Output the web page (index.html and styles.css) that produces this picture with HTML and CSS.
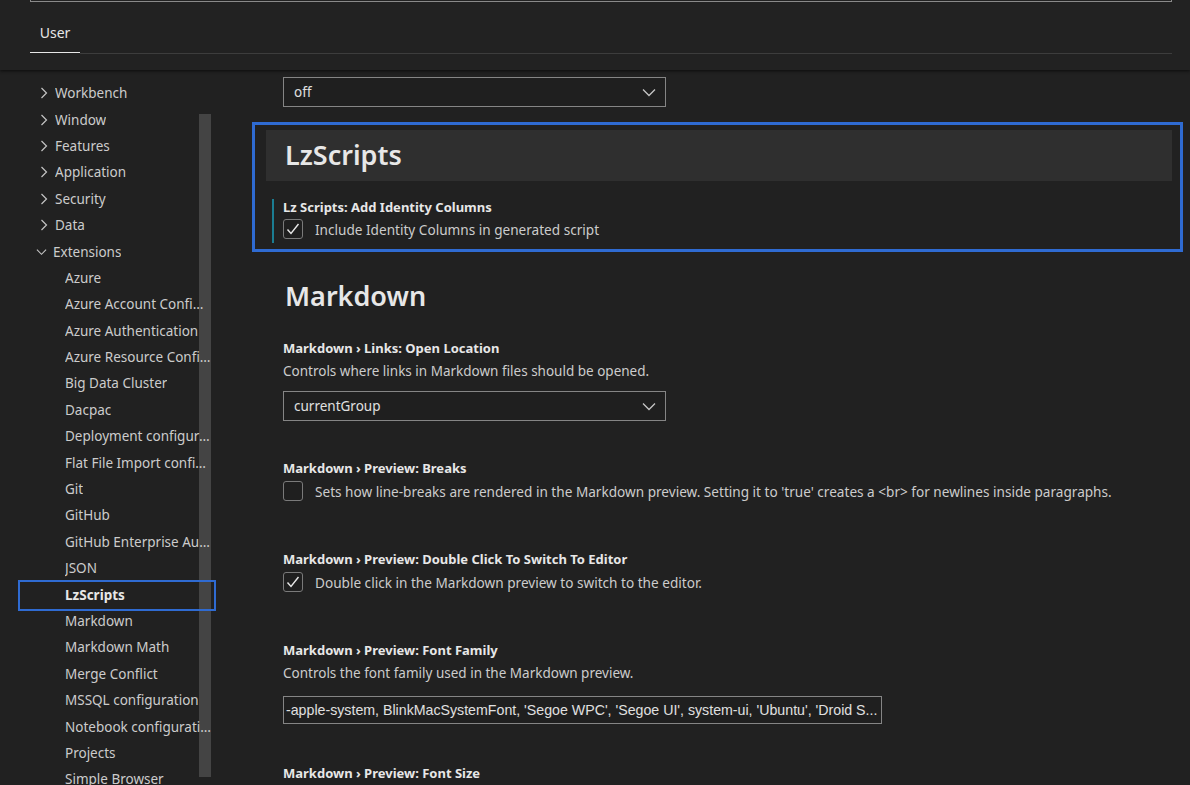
FILE: index.html
```html
<!DOCTYPE html>
<html>
<head>
<meta charset="utf-8">
<link rel="stylesheet" href="styles.css">
</head>
<body>
<header class="top">
  <div class="search"></div>
  <div class="tabs">
    <div class="tab active">User</div>
    <div class="tab-rest"></div>
  </div>
</header>
<div class="layout">
  <nav class="sidebar">
    <div class="scrollbar"></div>
    <ul class="tree">
      <li class="node"><span class="chev"><svg width="8" height="12" viewBox="0 0 8 12"><path d="M1.5 1 L6.5 6 L1.5 11" fill="none" stroke="#c5c5c5" stroke-width="1.2"/></svg></span><span class="label">Workbench</span></li>
      <li class="node"><span class="chev"><svg width="8" height="12" viewBox="0 0 8 12"><path d="M1.5 1 L6.5 6 L1.5 11" fill="none" stroke="#c5c5c5" stroke-width="1.2"/></svg></span><span class="label">Window</span></li>
      <li class="node"><span class="chev"><svg width="8" height="12" viewBox="0 0 8 12"><path d="M1.5 1 L6.5 6 L1.5 11" fill="none" stroke="#c5c5c5" stroke-width="1.2"/></svg></span><span class="label">Features</span></li>
      <li class="node"><span class="chev"><svg width="8" height="12" viewBox="0 0 8 12"><path d="M1.5 1 L6.5 6 L1.5 11" fill="none" stroke="#c5c5c5" stroke-width="1.2"/></svg></span><span class="label">Application</span></li>
      <li class="node"><span class="chev"><svg width="8" height="12" viewBox="0 0 8 12"><path d="M1.5 1 L6.5 6 L1.5 11" fill="none" stroke="#c5c5c5" stroke-width="1.2"/></svg></span><span class="label">Security</span></li>
      <li class="node"><span class="chev"><svg width="8" height="12" viewBox="0 0 8 12"><path d="M1.5 1 L6.5 6 L1.5 11" fill="none" stroke="#c5c5c5" stroke-width="1.2"/></svg></span><span class="label">Data</span></li>
      <li class="node"><span class="chev chev-down"><svg width="12" height="8" viewBox="0 0 12 8"><path d="M1 1.5 L6 6.5 L11 1.5" fill="none" stroke="#c5c5c5" stroke-width="1.2"/></svg></span><span class="label">Extensions</span></li>
      <li class="leaf"><span class="label">Azure</span></li>
      <li class="leaf"><span class="label">Azure Account Configuration</span></li>
      <li class="leaf"><span class="label">Azure Authentication</span></li>
      <li class="leaf"><span class="label">Azure Resource Configuration</span></li>
      <li class="leaf"><span class="label">Big Data Cluster</span></li>
      <li class="leaf"><span class="label">Dacpac</span></li>
      <li class="leaf"><span class="label">Deployment configuration</span></li>
      <li class="leaf"><span class="label">Flat File Import configuration</span></li>
      <li class="leaf"><span class="label">Git</span></li>
      <li class="leaf"><span class="label">GitHub</span></li>
      <li class="leaf"><span class="label">GitHub Enterprise Authentication</span></li>
      <li class="leaf"><span class="label">JSON</span></li>
      <li class="leaf selected"><span class="label">LzScripts</span></li>
      <li class="leaf"><span class="label">Markdown</span></li>
      <li class="leaf"><span class="label">Markdown Math</span></li>
      <li class="leaf"><span class="label">Merge Conflict</span></li>
      <li class="leaf"><span class="label">MSSQL configuration</span></li>
      <li class="leaf"><span class="label">Notebook configuration</span></li>
      <li class="leaf"><span class="label">Projects</span></li>
      <li class="leaf"><span class="label">Simple Browser</span></li>
    </ul>
  </nav>
  <main class="content">
    <div class="indent">
      <div class="dropdown">
        <span>off</span>
        <svg width="14" height="9" viewBox="0 0 14 9"><path d="M1 1.5 L7 7.5 L13 1.5" fill="none" stroke="#c5c5c5" stroke-width="1.3"/></svg>
      </div>
    </div>

    <section class="highlight">
      <h2 class="group-title band">LzScripts</h2>
      <div class="setting focused">
        <div class="setting-title">Lz Scripts: Add Identity Columns</div>
        <label class="check-row">
          <span class="checkbox"><svg width="16" height="16" viewBox="0 0 16 16"><path d="M2.5 8.5 L6 12.5 L13.5 3" fill="none" stroke="#e8e8e8" stroke-width="1.4"/></svg></span>
          <span class="check-label">Include Identity Columns in generated script</span>
        </label>
      </div>
    </section>

    <h2 class="group-title plain">Markdown</h2>

    <div class="setting s-links">
      <div class="setting-title">Markdown › Links: Open Location</div>
      <div class="setting-desc">Controls where links in Markdown files should be opened.</div>
      <div class="dropdown dd-links">
        <span>currentGroup</span>
        <svg width="14" height="9" viewBox="0 0 14 9"><path d="M1 1.5 L7 7.5 L13 1.5" fill="none" stroke="#c5c5c5" stroke-width="1.3"/></svg>
      </div>
    </div>

    <div class="setting s-breaks">
      <div class="setting-title">Markdown › Preview: Breaks</div>
      <label class="check-row">
        <span class="checkbox"></span>
        <span class="check-label">Sets how line-breaks are rendered in the Markdown preview. Setting it to 'true' creates a &lt;br&gt; for newlines inside paragraphs.</span>
      </label>
    </div>

    <div class="setting s-dbl">
      <div class="setting-title">Markdown › Preview: Double Click To Switch To Editor</div>
      <label class="check-row">
        <span class="checkbox"><svg width="16" height="16" viewBox="0 0 16 16"><path d="M2.5 8.5 L6 12.5 L13.5 3" fill="none" stroke="#e8e8e8" stroke-width="1.4"/></svg></span>
        <span class="check-label">Double click in the Markdown preview to switch to the editor.</span>
      </label>
    </div>

    <div class="setting s-font">
      <div class="setting-title">Markdown › Preview: Font Family</div>
      <div class="setting-desc">Controls the font family used in the Markdown preview.</div>
      <div class="textbox">-apple-system, BlinkMacSystemFont, 'Segoe WPC', 'Segoe UI', system-ui, 'Ubuntu', 'Droid S...</div>
    </div>

    <div class="setting s-size">
      <div class="setting-title">Markdown › Preview: Font Size</div>
    </div>
  </main>
</div>
</body>
</html>
```

FILE: styles.css
```css
* { box-sizing: border-box; }

html, body {
  margin: 0;
  padding: 0;
  height: 100%;
  overflow: hidden;
}

body {
  background: #212121;
  color: #cccccc;
  font-family: "Noto Sans", "Open Sans", sans-serif;
  font-size: 13px;
}

/* ---------- header ---------- */
.top {
  height: 70px;
  background: #222222;
  box-shadow: 0 1px 3px #0c0c0c;
  position: relative;
  z-index: 2;
}

.search {
  margin-left: 30px;
  width: 1142px;
  height: 2px;
  border: 1px solid #8a8a8a;
  border-top: none;
}

.tabs {
  display: flex;
  align-items: flex-start;
  margin-left: 30px;
  margin-right: 18px;
}

.tab {
  width: 50px;
  height: 51px;
  padding-top: 22px;
  text-align: center;
  font-size: 14px;
  line-height: 18px;
  color: #e7e7e7;
  border-bottom: 1px solid #e7e7e7;
}

.tab-rest {
  flex: 1;
  height: 52px;
  border-bottom: 1px solid #3d3d3d;
}

/* ---------- layout ---------- */
.layout {
  display: flex;
  height: 715px;
}

.sidebar {
  width: 213px;
  flex: none;
  position: relative;
  padding-top: 10px;
}

.scrollbar {
  position: absolute;
  left: 199px;
  top: 44px;
  width: 12px;
  height: 663px;
  background: #444444;
}

.tree {
  list-style: none;
  margin: 0;
  padding: 0;
  position: relative;
  z-index: 1;
}

.tree li {
  height: 26.4px;
  display: flex;
  align-items: center;
  width: 211px;
  white-space: nowrap;
  color: #cccccc;
  font-size: 13.5px;
}

.tree .label {
  overflow: hidden;
  text-overflow: ellipsis;
  min-width: 0;
}

.node {
  padding-left: 36px;
}

.chev {
  width: 19px;
  display: flex;
  justify-content: center;
  align-items: center;
  padding-right: 4px;
}

.chev-down {
  padding-right: 6px;
  margin-left: -2px;
  padding-left: 2px;
}

.leaf {
  padding-left: 65px;
}

.leaf.selected {
  position: relative;
  font-weight: 700;
  color: #e7e7e7;
}

.leaf.selected::after {
  content: "";
  position: absolute;
  left: 18px;
  top: -1px;
  width: 194px;
  height: 27px;
  border: 2px solid #2f6bd2;
}

/* ---------- content ---------- */
.content {
  flex: 1;
  padding: 7px 18px 0 53px;
  overflow: hidden;
}

.indent {
  padding-left: 17px;
}

.dropdown {
  width: 383px;
  height: 30px;
  border: 1px solid #858585;
  background: #1f1f1f;
  display: flex;
  align-items: center;
  justify-content: space-between;
  padding: 0 9px 0 10px;
  font-size: 13.5px;
  color: #e0e0e0;
}

.highlight {
  margin: 15px -11px 0 -14px;
  border: 3px solid #2f6bd2;
  padding: 5px 8px 6px 11px;
}

.group-title {
  margin: 0;
  height: 51px;
  line-height: 50px;
  padding-left: 19px;
  font-size: 27px;
  font-weight: 600;
  color: #e7e7e7;
}

.group-title.band {
  background: #2f2f2f;
}

.group-title.plain {
  margin-top: 19px;
}

.setting {
  padding-left: 17px;
}

.setting-title {
  font-weight: 700;
  font-size: 13px;
  line-height: 18px;
  color: #e7e7e7;
}

.setting-desc {
  margin-top: 5px;
  line-height: 18px;
  font-size: 13.5px;
  color: #cccccc;
}

.setting.focused {
  margin: 18px 0 0 6px;
  border-left: 2px solid #1b7d92;
  padding: 0 0 4px 9px;
}

.setting.focused .setting-title {
  line-height: 16px;
}

.check-row {
  display: flex;
  align-items: center;
  margin-top: 4px;
  height: 20px;
}

.checkbox {
  width: 20px;
  height: 20px;
  border: 1px solid #7a7a7a;
  border-radius: 3px;
  background: #1f1f1f;
  display: flex;
  align-items: center;
  justify-content: center;
  flex: none;
}

.check-label {
  margin-left: 12px;
  font-size: 13.6px;
  color: #cccccc;
  white-space: nowrap;
}

.s-links { margin-top: 17px; }
.dd-links { margin-top: 11px; }
.s-breaks { margin-top: 38px; }
.s-dbl { margin-top: 49px; }
.s-font { margin-top: 49px; }
.s-size { margin-top: 40px; }

.textbox {
  margin-top: 14px;
  width: 599px;
  height: 28px;
  border: 1px solid #858585;
  background: #1f1f1f;
  padding: 0 2px;
  line-height: 26px;
  white-space: nowrap;
  overflow: hidden;
  font-family: "Liberation Sans Narrow", "Liberation Sans", sans-serif;
  font-size: 14.2px;
  color: #e0e0e0;
}
```
